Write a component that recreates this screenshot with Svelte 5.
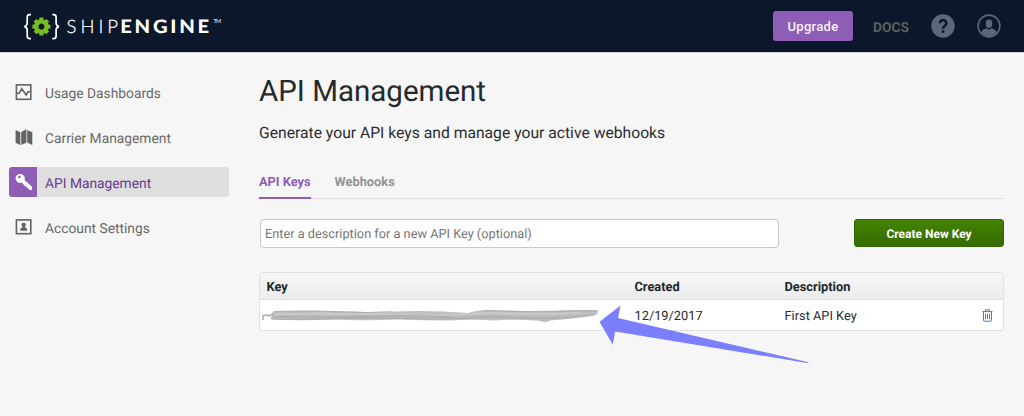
<script>
  const nav = [
    { id: 'usage', label: 'Usage Dashboards' },
    { id: 'carrier', label: 'Carrier Management' },
    { id: 'api', label: 'API Management' },
    { id: 'account', label: 'Account Settings' }
  ];
  const teeth = [0, 45, 90, 135, 180, 225, 270, 315];
</script>

<div class="page">
  <header>
    <svg class="logo" width="204" height="32" viewBox="20 10 204 32">
      <g fill="none" stroke="#fff" stroke-width="1.7">
        <path d="M31 14.6h-1.4q-2.4 0-2.4 2.5v6q0 2.8-2.8 3.5q2.8.7 2.8 3.5v6q0 2.5 2.4 2.5h1.4" />
        <path d="M52.3 14.6h1.4q2.4 0 2.4 2.5v6q0 2.8 2.8 3.5q-2.8.7-2.8 3.5v6q0 2.5-2.4 2.5h-1.4" />
      </g>
      <g transform="translate(41.4 26.6)" fill="#78be20">
        {#each teeth as a}
          <path d="M-2.4-5.5L-1.9-9H1.9L2.4-5.5Z" transform={`rotate(${a})`} />
        {/each}
        <circle r="5.1" fill="none" stroke="#78be20" stroke-width="4.2" />
      </g>
      <text class="thin" x="66.5" y="33.2" textLength="55.5" lengthAdjust="spacingAndGlyphs">SHIP</text>
      <text class="heavy" x="120.3" y="33.2" textLength="91.500" lengthAdjust="spacingAndGlyphs">ENGINE</text>
      <text class="tm" x="213.5" y="23.2" textLength="7.5">TM</text>
    </svg>
    <div class="actions">
      <button class="upgrade">Upgrade</button>
      <span class="docs">DOCS</span>
      <svg class="help" width="24" height="24" viewBox="0 0 24 24">
        <circle cx="12" cy="12" r="11.7" fill="#5b687b" />
        <path d="M8.9 9.2a3.2 3.2 0 1 1 5 2.6c-1.2.9-1.9 1.3-1.9 2.9" fill="none" stroke="#0c172b" stroke-width="2.5" />
        <rect x="10.7" y="16.2" width="2.6" height="2.6" fill="#0c172b" />
      </svg>
      <svg width="24" height="24" viewBox="0 0 24 24">
        <circle cx="12" cy="12" r="10.9" fill="none" stroke="#5b687b" stroke-width="1.6" />
        <ellipse cx="12" cy="9.7" rx="3.3" ry="4.2" fill="#5b687b" />
        <path d="M4.3 18.2C5 16.2 7 15.3 9.3 14.3Q12 16.6 14.7 14.3C17 15.3 19 16.2 19.7 18.2Q16.5 22 12 22T4.3 18.2Z" fill="#5b687b" />
      </svg>
    </div>
  </header>

  <div class="body">
    <nav>
      {#each nav as item}
        <div class="item" class:active={item.id === 'api'}>
          <span class="icon">
            {#if item.id === 'usage'}
              <svg width="18" height="18" viewBox="0 0 18 18" fill="none" stroke="#636363">
                <rect x="1.4" y="1.9" width="14.4" height="14.4" stroke-width="1.6" />
                <path d="M2 10.2h2.2L6.7 5.8l4.5 6.2L13 8.8h3" stroke-width="1.6" />
              </svg>
            {:else if item.id === 'carrier'}
              <svg width="18" height="18" viewBox="0 0 18 18" fill="#636363">
                <path d="M.6 2L5.300 4.200V17L.6 14.700ZM6.200 4.200L10.400 1.600H11.400V14.600L6.200 17ZM12.200 2L17.300 4.200V17L12.200 14.500Z" />
              </svg>
            {:else if item.id === 'api'}
              <svg width="18" height="18" viewBox="0 0 18 18">
                <path d="M5.5.9a4.5 4.5 0 0 1 4 6.1l7.300 6.500.2 3.500-2.700.1-.5-1.700-1.700-.1-.3-1.600-1.700-.2-3.200-4A4.500 4.500 0 1 1 5.500.9ZM4.400 2.700a1.300 1.300 0 1 0 0 2.600 1.300 1.300 0 0 0 0-2.600Z" fill="#fff" fill-rule="evenodd" />
              </svg>
            {:else}
              <svg width="18" height="18" viewBox="0 0 18 18">
                <rect x="1.4" y="1.900" width="14.4" height="13.800" fill="none" stroke="#636363" stroke-width="1.6" />
                <path d="M8.700 4.700a2.100 2.100 0 0 1 1.300 3.800v1l2 .8v2.500H5.400v-2.500l2-.8v-1A2.100 2.100 0 0 1 8.700 4.700Z" fill="#636363" />
              </svg>
            {/if}
          </span>
          <span class="label">{item.label}</span>
        </div>
      {/each}
    </nav>

    <main>
      <h1>API Management</h1>
      <p>Generate your API keys and manage your active webhooks</p>
      <div class="tabs">
        <span class="tab on">API Keys</span>
        <span class="tab">Webhooks</span>
      </div>
      <div class="create">
        <input placeholder="Enter a description for a new API Key (optional)" />
        <button>Create New Key</button>
      </div>
      <div class="table">
        <div class="row head"><span>Key</span><span>Created</span><span>Description</span></div>
        <div class="row">
          <span class="secret">
            <svg width="340" height="16" viewBox="262 307 340 16">
              <defs>
                <linearGradient id="smear" x2="0" y2="1">
                  <stop offset="0" stop-color="#b8b8b8" />
                  <stop offset=".35" stop-color="#c2c2c2" />
                  <stop offset=".65" stop-color="#b6b6b6" />
                  <stop offset="1" stop-color="#cacaca" />
                </linearGradient>
                <filter id="soft" x="-5%" y="-50%" width="110%" height="200%">
                  <feGaussianBlur stdDeviation=".6" />
                </filter>
              </defs>
              <g filter="url(#soft)">
                <path d="M271 317L274 311.500Q310 309.800 350 311.500T395 311.500Q432 310 468 313Q478 309.700 492 310Q528 311.700 552 311Q576 309.500 597.500 310.200Q599 314.500 594 315.700Q575 318.500 550 320.500Q546 322.500 538 320.800Q515 319 495 320.500Q470 319 450 320.500Q415 320 400 319.500Q360 321 335 319.500Q300 321 271 319.500Z" fill="url(#smear)" />
                <g fill="none" stroke-linecap="round">
                  <path d="M263 319.500V316Q266 314 269 316L274 313" stroke="#b0b0b0" stroke-width="1.6" />
                  <path d="M274 311.600Q310 310.200 338 311.800T392 311.600M484 310.700Q520 312 556 311.300T597 310.800" stroke="#a8a8a8" stroke-width=".8" />
                  <path d="M275 314.500Q320 312.800 380 314.500T464 314.500Q484 311.800 510 313.500T580 312.500" stroke="#d0d0d0" stroke-width="1" />
                  <path d="M272 319Q310 320 342 318.600T410 318.700Q450 320 475 317.500Q490 315.500 520 318T594 314.500M540 320.700Q545 322.300 549 320.700" stroke="#a8a8a8" stroke-width=".8" />
                  <path d="M280 316.500Q325 318 365 316.300T450 317" stroke="#aaa" stroke-width="1" />
                </g>
              </g>
            </svg>
          </span>
          <span class="cell">12/19/2017</span>
          <span class="cell">First API Key</span>
          <svg class="trash" width="12" height="13" viewBox="0 0 12 13" fill="none" stroke="#4778ce" stroke-width="1">
            <path d="M.5 2.600H10.500M3.500 2.300V.8H7.500V2.300M1.500 3V11.200Q1.500 12.200 2.500 12.200H8.500Q9.500 12.200 9.500 11.200V3M3.500 4.800V10.200M5.500 4.800V10.200M7.500 4.800V10.200" />
          </svg>
        </div>
      </div>
    </main>
  </div>
  <svg class="arrow" width="212" height="60" viewBox="598 304 212 60">
    <path d="M599.5 321.7L620.5 305.5L618 318L808.5 362.2Q808.5 363.2 807 363L615.2 331.5L612.7 344.5Z" fill="#7b7ffb" />
  </svg>
</div>

<style>
  :global(body) { background: #f6f6f6; }
  .page { width: 1024px; height: 416px; overflow: hidden; position: relative; background: #f6f6f6; color: #2a2d30; font-family: Roboto, sans-serif; box-sizing: border-box; text-rendering: geometricPrecision; }
  .page * { box-sizing: border-box; }
  header { height: 53px; background: #0c172b; border-bottom: 1px solid #d5d5d8; display: flex; justify-content: space-between; padding: 10px 23px 0 20px; }
  .logo text { fill: #fff; font-family: Lato, sans-serif; font-size: 18.5px; }
  .logo .thin { font-weight: 300; letter-spacing: 4px; stroke: #fff; stroke-width: .25px; }
  .logo .heavy { font-weight: 900; letter-spacing: 2.5px; }
  .logo .tm { font-size: 5.5px; font-weight: 400; }
  .actions { display: flex; height: 32px; align-items: center; }
  .upgrade { width: 80px; height: 30px; border: 0; border-radius: 3px; background: #8e5db6; color: #f6f0fa; font: 500 13px Roboto, sans-serif; letter-spacing: .3px; padding: 0; }
  .docs { width: 37px; margin: 4px 21px 0 20px; color: #58615f; font-size: 13.8px; font-weight: 700; line-height: 16px; }
  .help { margin-right: 22px; }
  .body { display: flex; gap: 30px; padding-left: 9px; }
  nav { width: 220px; padding-top: 24px; display: flex; flex-direction: column; gap: 15px; }
  .item { height: 30px; display: flex; align-items: center; border-radius: 3px; overflow: hidden; color: #696969; font-size: 13.8px; }
  .icon { width: 28px; height: 30px; display: flex; align-items: center; justify-content: center; margin-right: 8px; padding-left: 2px; }
  .label { line-height: 20px; padding-top: 4px; }
  .active { background: #dfdfdf; color: #66398f; }
  .active .icon { background: #8e5db6; }
  main { width: 745px; }
  h1 { font-size: 29.5px; line-height: 36px; font-weight: 400; margin: 21px 0 0; color: #26292b; }
  p { font-size: 15.7px; line-height: 20px; margin: 13px 0 0; }
  .tabs { display: flex; gap: 24px; height: 30px; margin-top: 26px; border-bottom: 1px solid #dfdfdf; font-size: 12.8px; font-weight: 700; color: #939393; line-height: 28px; }
  .tab { height: 30px; }
  .on { color: #8e5db6; border-bottom: 2px solid #8e5db6; }
  .create { display: flex; justify-content: space-between; margin: 20px 0 0 1px; }
  input { width: 518.5px; height: 29px; border: 1px solid #c8c8c8; border-radius: 4px; background: #fff; padding: 1px 4px 0; font: 12.75px Roboto, sans-serif; text-rendering: geometricPrecision; }
  input::placeholder { color: #757575; opacity: 1; }
  .create button { width: 150px; height: 28px; border: 1px solid #2e6900; border-radius: 3px; background: linear-gradient(#438400, #356b00); color: #fff; font: 700 12px Roboto, sans-serif; padding: 1px 0 0; text-rendering: geometricPrecision; }
  .table { margin-top: 24px; height: 59px; border: 1px solid #e0e0e0; border-radius: 3px; background: #fff; overflow: hidden; }
  .row { height: 30px; display: grid; grid-template-columns: 368px 150px 197px 12px; align-items: center; padding-left: 6.5px; font-size: 12.8px; }
  .head { height: 27px; font-weight: 700; color: #20282c; background: linear-gradient(#f6f6f6, #ececec); border-bottom: 1px solid #dedede; }
  .head span, .cell { padding-top: 2px; }
  .secret { margin-left: -4.5px; height: 16px; }
  .secret svg { display: block; }
  .arrow { position: absolute; left: 598px; top: 304px; }
</style>
